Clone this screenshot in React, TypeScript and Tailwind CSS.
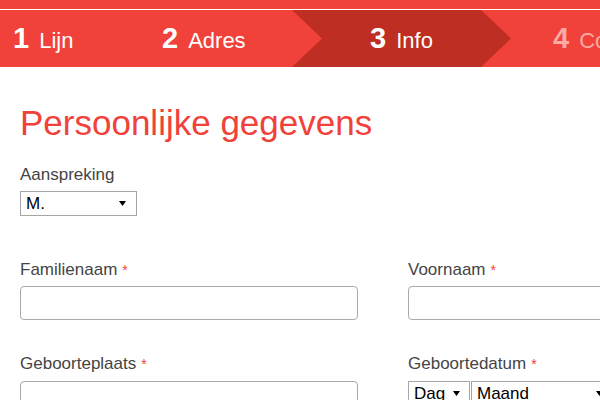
import React from "react";

function Tri() {
  return (
    <svg width="7" height="5" viewBox="0 0 7 5" className="shrink-0">
      <polygon points="0,0 7,0 3.5,5" fill="#000" />
    </svg>
  );
}

function Step({ n, label, faded }: { n: string; label: string; faded?: boolean }) {
  return (
    <div className={`flex items-baseline ${faded ? "text-[#f9aaa4]" : "text-white"}`}>
      <span className="text-[29px] font-bold leading-none">{n}</span>
      <span className="text-[22px] leading-none ml-[10px]">{label}</span>
    </div>
  );
}

function Label({ text, req }: { text: string; req?: boolean }) {
  return (
    <div className="text-[17px] leading-[20px] text-[#454545]">
      {text}
      {req && <span className="text-[#f0413a] text-[14px] ml-[5px] align-top">*</span>}
    </div>
  );
}

export default function App() {
  return (
    <div
      className="w-full h-[400px] overflow-hidden bg-white"
      style={{ fontFamily: '"Liberation Sans", Arial, sans-serif' }}
    >
      <div className="h-[9px] bg-[#f0413a]" />
      <div className="h-px bg-white" />
      <div className="flex h-[57px] bg-[#f0413a] w-[700px]">
        <div className="w-[162px] pl-[13px] flex items-center">
          <Step n="1" label="Lijn" />
        </div>
        <div className="w-[130px] flex items-center">
          <Step n="2" label="Adres" />
        </div>
        <div className="relative w-[219px] flex items-center justify-center">
          <svg
            className="absolute inset-0"
            width="219"
            height="57"
            viewBox="0 0 219 57"
            preserveAspectRatio="none"
          >
            <polygon points="0,0 189,0 219,28.5 189,57 0,57 30,28.5" fill="#be2e22" />
          </svg>
          <div className="relative">
            <Step n="3" label="Info" />
          </div>
        </div>
        <div className="pl-[42px] flex items-center">
          <Step n="4" label="Contact" faded />
        </div>
      </div>

      <div className="px-[20px] pt-[36px] w-[760px]">
        <h1 className="text-[35px] leading-[40px] text-[#f0413a]">Persoonlijke gegevens</h1>

        <div className="mt-[22px]">
          <Label text="Aanspreking" />
          <div className="mt-[6px] w-[117px] h-[25px] border border-[#a6a6a6] flex items-center justify-between pl-[5px] pr-[10px] text-[17px] text-black">
            <span>M.</span>
            <Tri />
          </div>
        </div>

        <div className="mt-[44px] grid grid-cols-[338px_338px] gap-x-[50px]">
          <div>
            <Label text="Familienaam" req />
            <div className="mt-[6px] h-[34px] border border-[#a9a9a9] rounded-[4px]" />
          </div>
          <div>
            <Label text="Voornaam" req />
            <div className="mt-[6px] h-[34px] border border-[#a9a9a9] rounded-[4px]" />
          </div>
        </div>

        <div className="mt-[34px] grid grid-cols-[338px_338px] gap-x-[50px]">
          <div>
            <Label text="Geboorteplaats" req />
            <div className="mt-[7px] h-[34px] border border-[#a9a9a9] rounded-[4px]" />
          </div>
          <div>
            <Label text="Geboortedatum" req />
            <div className="mt-[7px] flex gap-[1px]">
              <div className="w-[62px] h-[25px] border border-[#a6a6a6] flex items-center justify-between pl-[5px] pr-[9px] text-[17px] text-black">
                <span>Dag</span>
                <Tri />
              </div>
              <div className="w-[142px] h-[25px] border border-[#a6a6a6] flex items-center justify-between pl-[5px] pr-[9px] text-[17px] text-black">
                <span>Maand</span>
                <Tri />
              </div>
            </div>
          </div>
        </div>
      </div>
    </div>
  );
}
